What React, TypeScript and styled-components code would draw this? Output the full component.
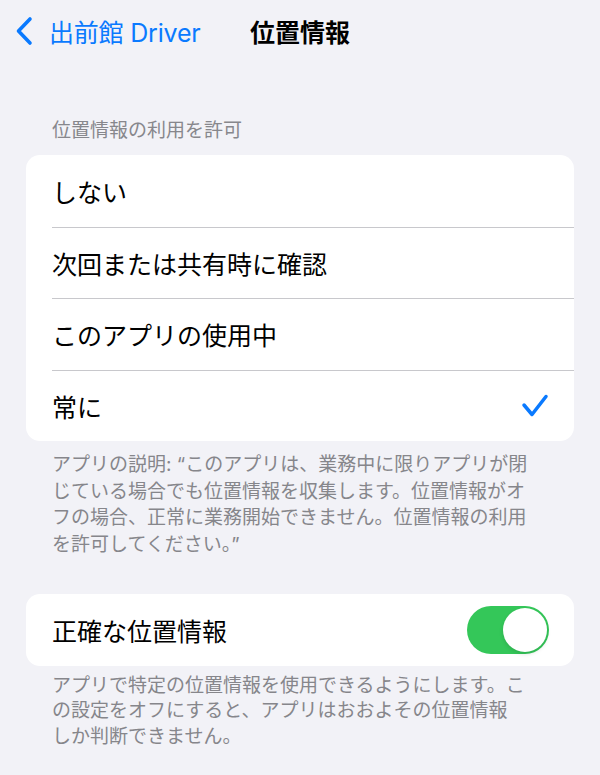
import React from "react";
import styled, { createGlobalStyle } from "styled-components";

const GlobalStyle = createGlobalStyle`
  html, body {
    margin: 0;
    padding: 0;
    background: #f2f2f7;
  }
  body {
    font-family: "Inter", "Noto Sans CJK JP", sans-serif;
    -webkit-font-smoothing: antialiased;
  }
`;

const Page = styled.div`
  width: 600px;
  min-height: 775px;
  background: #f2f2f7;
  overflow: hidden;
`;

const NavBar = styled.div`
  height: 62px;
  display: grid;
  grid-template-columns: 1fr auto 1fr;
  align-items: center;
`;

const BackButton = styled.div`
  display: flex;
  align-items: center;
  gap: 16px;
  padding-left: 15px;
  color: #0a7aff;
  font-size: 25px;
  letter-spacing: -0.2px;
`;

const NavTitle = styled.div`
  font-size: 25px;
  font-weight: 700;
  color: #000;
`;

const SectionHeader = styled.div`
  margin: 57px 0 12px;
  padding: 0 52px;
  font-size: 19px;
  line-height: 24px;
  color: #87878c;
`;

const Card = styled.div<{ $top?: number }>`
  margin: ${(p) => p.$top ?? 0}px 26px 0;
  background: #fff;
  border-radius: 14px;
  overflow: hidden;
`;

const Row = styled.div`
  padding-left: 26px;
  & + & > div {
    border-top: 1px solid #c8c8cc;
  }
`;

const RowInner = styled.div`
  height: 71.5px;
  box-sizing: border-box;
  display: flex;
  align-items: center;
  justify-content: space-between;
  padding-right: 25px;
  font-size: 25px;
  color: #000;
`;

const Footer = styled.div<{ $lh: number; $top: number }>`
  margin-top: ${(p) => p.$top}px;
  padding: 0 30px 0 52px;
  font-size: 19px;
  line-height: ${(p) => p.$lh}px;
  color: #86868b;
  white-space: nowrap;
`;

const Toggle = styled.div<{ $on: boolean }>`
  width: 82px;
  height: 48px;
  border-radius: 24px;
  background: ${(p) => (p.$on ? "#34c759" : "#e9e9ea")};
  display: flex;
  justify-content: ${(p) => (p.$on ? "flex-end" : "flex-start")};
  align-items: center;
  padding: 2px;
  box-sizing: border-box;
`;

const Thumb = styled.div`
  width: 44px;
  height: 44px;
  border-radius: 50%;
  background: #fff;
  box-shadow: 0 2px 4px rgba(0, 0, 0, 0.12);
`;

const Chevron = () => (
  <svg width="18" height="30" viewBox="0 0 18 30">
    <path
      d="M15 3 L3.5 15 L15 27"
      fill="none"
      stroke="#0a7aff"
      strokeWidth="3.6"
      strokeLinecap="round"
      strokeLinejoin="round"
    />
  </svg>
);

const Check = () => (
  <svg width="28" height="26" viewBox="0 0 28 26">
    <path
      d="M3 12 L11 21.5 L25 3.5"
      fill="none"
      stroke="#0a7aff"
      strokeWidth="3.5"
      strokeLinecap="round"
      strokeLinejoin="round"
    />
  </svg>
);

const options = ["しない", "次回または共有時に確認", "このアプリの使用中", "常に"];
const selected = 3;

export default function App() {
  return (
    <Page>
      <GlobalStyle />
      <NavBar>
        <BackButton>
          <Chevron />
          <span>出前館 Driver</span>
        </BackButton>
        <NavTitle>位置情報</NavTitle>
        <div />
      </NavBar>

      <SectionHeader>位置情報の利用を許可</SectionHeader>
      <Card>
        {options.map((o, i) => (
          <Row key={o}>
            <RowInner>
              <span>{o}</span>
              {i === selected && <Check />}
            </RowInner>
          </Row>
        ))}
      </Card>
      <Footer $lh={26.5} $top={11}>
        アプリの説明: “このアプリは、業務中に限りアプリが閉
        <br />
        じている場合でも位置情報を収集します。位置情報がオ
        <br />
        フの場合、正常に業務開始できません。位置情報の利用
        <br />
        を許可してください。”
      </Footer>

      <Card $top={36}>
        <Row>
          <RowInner>
            <span>正確な位置情報</span>
            <Toggle $on>
              <Thumb />
            </Toggle>
          </RowInner>
        </Row>
      </Card>
      <Footer $lh={25.5} $top={7}>
        アプリで特定の位置情報を使用できるようにします。こ
        <br />
        の設定をオフにすると、アプリはおおよその位置情報
        <br />
        しか判断できません。
      </Footer>
    </Page>
  );
}
